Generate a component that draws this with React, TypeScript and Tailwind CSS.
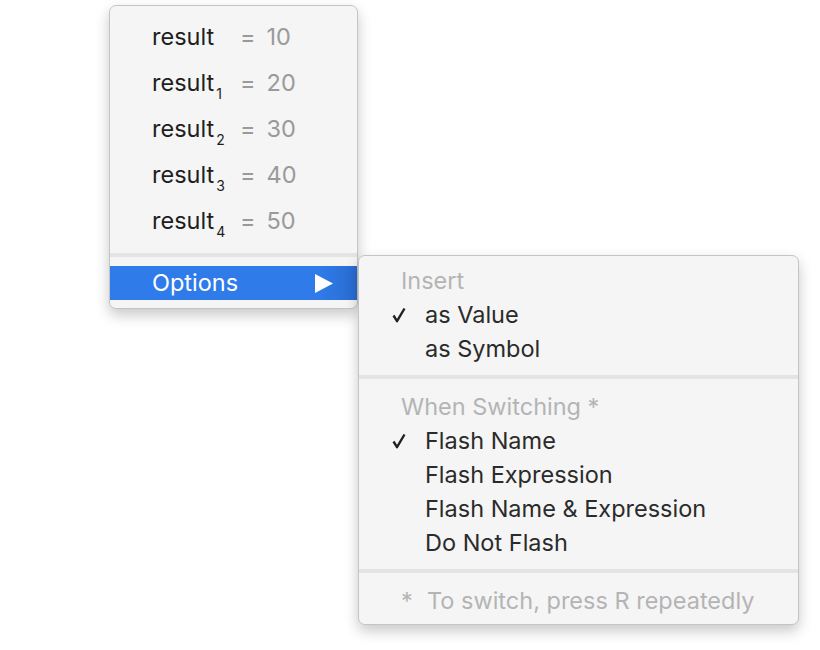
const font = { fontFamily: "Inter, 'Liberation Sans', sans-serif" };

const results = [
  { sub: "", value: "10" },
  { sub: "1", value: "20" },
  { sub: "2", value: "30" },
  { sub: "3", value: "40" },
  { sub: "4", value: "50" },
];

function Check() {
  return (
    <svg width="14" height="16" viewBox="0 0 14 16" className="shrink-0">
      <path d="M1.5 8.5 L5 14.2 L12.5 1.5" fill="none" stroke="#222" strokeWidth="2.4" strokeLinejoin="round" />
    </svg>
  );
}

function Separator({ bottom = "mb-[9px]" }: { bottom?: string }) {
  return <div className={`mt-[9px] ${bottom} h-[4px] bg-[#e4e4e4]`} />;
}

function SubItem({ label, checked = false }: { label: string; checked?: boolean }) {
  return (
    <div className="flex h-[34px] items-center pl-[33px] text-[23.5px] text-[#2b2b2b]">
      <div className="w-[33px]">{checked && <Check />}</div>
      <span>{label}</span>
    </div>
  );
}

function Header({ label }: { label: string }) {
  return (
    <div className="flex h-[34px] items-center pl-[42px] text-[23.5px] text-[#b4b4b4]">{label}</div>
  );
}

export default function App() {
  return (
    <div className="relative h-[650px] w-[820px] overflow-hidden bg-white" style={font}>
      {/* main menu */}
      <div className="absolute left-[109px] top-[5px] w-[249px] overflow-hidden rounded-[7px] border border-[#c4c4c4] bg-[#f5f5f5] pt-[8px] pb-[8px] shadow-[0_6px_14px_rgba(0,0,0,0.22)]">
        {results.map((r) => (
          <div key={r.value} className="flex h-[46px] items-center pl-[42px] text-[23.5px]">
            <div className="flex w-[88px] items-baseline text-[#1e1e1e]">
              <span>result</span>
              {r.sub && <span className="relative top-[8px] ml-[2px] text-[14px]">{r.sub}</span>}
            </div>
            <span className="text-[#9a9a9a]">=</span>
            <span className="ml-[11px] text-[#9a9a9a]">{r.value}</span>
          </div>
        ))}
        <Separator />
        <div className="flex h-[34px] items-center justify-between bg-gradient-to-r from-[#2f7be9] from-85% to-[#2a6bd0] pl-[42px] pr-[24px] text-[23.5px] text-white">
          <span>Options</span>
          <svg width="18" height="19" viewBox="0 0 18 19">
            <path d="M0 0 L18 9.5 L0 19 Z" fill="#fff" />
          </svg>
        </div>
      </div>

      {/* submenu */}
      <div className="absolute left-[358px] top-[255px] w-[441px] overflow-hidden rounded-[7px] border border-[#c4c4c4] bg-[#f5f5f5] pt-[8px] pb-[6px] shadow-[0_6px_14px_rgba(0,0,0,0.22)]">
        <Header label="Insert" />
        <SubItem label="as Value" checked />
        <SubItem label="as Symbol" />
        <Separator bottom="mb-[11px]" />
        <Header label="When Switching *" />
        <SubItem label="Flash Name" checked />
        <SubItem label="Flash Expression" />
        <SubItem label="Flash Name & Expression" />
        <SubItem label="Do Not Flash" />
        <Separator bottom="mb-[11px]" />
        <div className="flex h-[34px] items-center pl-[42px] text-[23.5px] text-[#b4b4b4]">
          <span className="w-[26px]">*</span>
          <span>To switch, press R repeatedly</span>
        </div>
      </div>
    </div>
  );
}
